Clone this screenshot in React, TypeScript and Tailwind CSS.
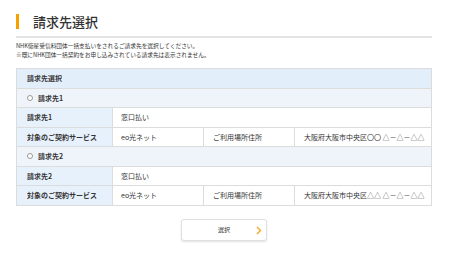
import React from "react";

const font = { fontFamily: '"Noto Sans CJK JP", "Noto Sans", sans-serif' };

function LabelCell({ children }: { children: React.ReactNode }) {
  return (
    <div className="w-[96px] shrink-0 bg-[#e7f1fc] border-r border-[#dcdcdc] pl-[10px] flex items-center font-bold text-[7px] text-[#333]">
      {children}
    </div>
  );
}

function Row({ children, bg = "bg-white" }: { children: React.ReactNode; bg?: string }) {
  return <div className={`flex h-[19.5px] border-b border-[#dcdcdc] ${bg}`}>{children}</div>;
}

function Block({ n, addr }: { n: number; addr: string }) {
  return (
    <>
      <Row bg="bg-[#eef4fa]">
        <div className="flex items-center pl-[10px] text-[7px] font-bold text-[#333] gap-[5px]">
          <span className="inline-block w-[6px] h-[6px] rounded-full border border-[#999] bg-white" />
          <span>請求先{n}</span>
        </div>
      </Row>
      <Row>
        <LabelCell>請求先{n}</LabelCell>
        <div className="flex items-center pl-[8px] text-[7px] text-[#333]">窓口払い</div>
      </Row>
      <Row>
        <LabelCell>対象のご契約サービス</LabelCell>
        <div className="w-[91px] shrink-0 border-r border-[#dcdcdc] flex items-center pl-[8px] text-[7px] text-[#333]">eo光ネット</div>
        <div className="w-[91px] shrink-0 border-r border-[#dcdcdc] flex items-center pl-[9px] text-[7px] text-[#333]">ご利用場所住所</div>
        <div className="flex-1 flex items-center pl-[9px] text-[7px] text-[#333]">{addr}</div>
      </Row>
    </>
  );
}

export default function App() {
  return (
    <div className="w-[450px] h-[254px] bg-white overflow-hidden" style={font}>
      <div className="ml-[16px] w-[416px]">
        <div className="pt-[14px] flex items-center h-[29px]">
          <div className="w-[3px] h-[15px] bg-[#f5a200]" />
          <div className="ml-[14px] text-[13px] leading-[15px] text-[#333] font-medium">請求先選択</div>
        </div>
        <div className="mt-[7px] h-[2px] bg-[#e3e3e3]" />
        <div className="mt-[3px] text-[5.7px] leading-[9px] text-[#333]">
          <div>NHK衛星受信料団体一括支払いをされるご請求先を選択してください。</div>
          <div>※既にNHK団体一括契約をお申し込みされている請求先は表示されません。</div>
        </div>
        <div className="mt-[9px] border border-b-0 border-[#dcdcdc]">
          <Row bg="bg-[#e3eefb]">
            <div className="flex items-center pl-[10px] text-[7px] font-bold text-[#333]">請求先選択</div>
          </Row>
          <Block n={1} addr="大阪府大阪市中央区〇〇 △－△－△△" />
          <Block n={2} addr="大阪府大阪市中央区△△ △－△－△△" />
        </div>
        <div className="flex justify-center mt-[13px]">
          <button className="relative w-[86px] h-[22px] rounded-[3px] border border-[#e0e0e0] bg-white shadow-[0_1px_2px_rgba(0,0,0,0.12)] flex items-center justify-center text-[6px] text-[#333]">
            選択
            <svg className="absolute right-[4px] top-[6.5px]" width="6" height="9" viewBox="0 0 6 9">
              <path d="M1 1 L4.5 4.5 L1 8" stroke="#f5a623" strokeWidth="1.4" fill="none" />
            </svg>
          </button>
        </div>
      </div>
    </div>
  );
}
